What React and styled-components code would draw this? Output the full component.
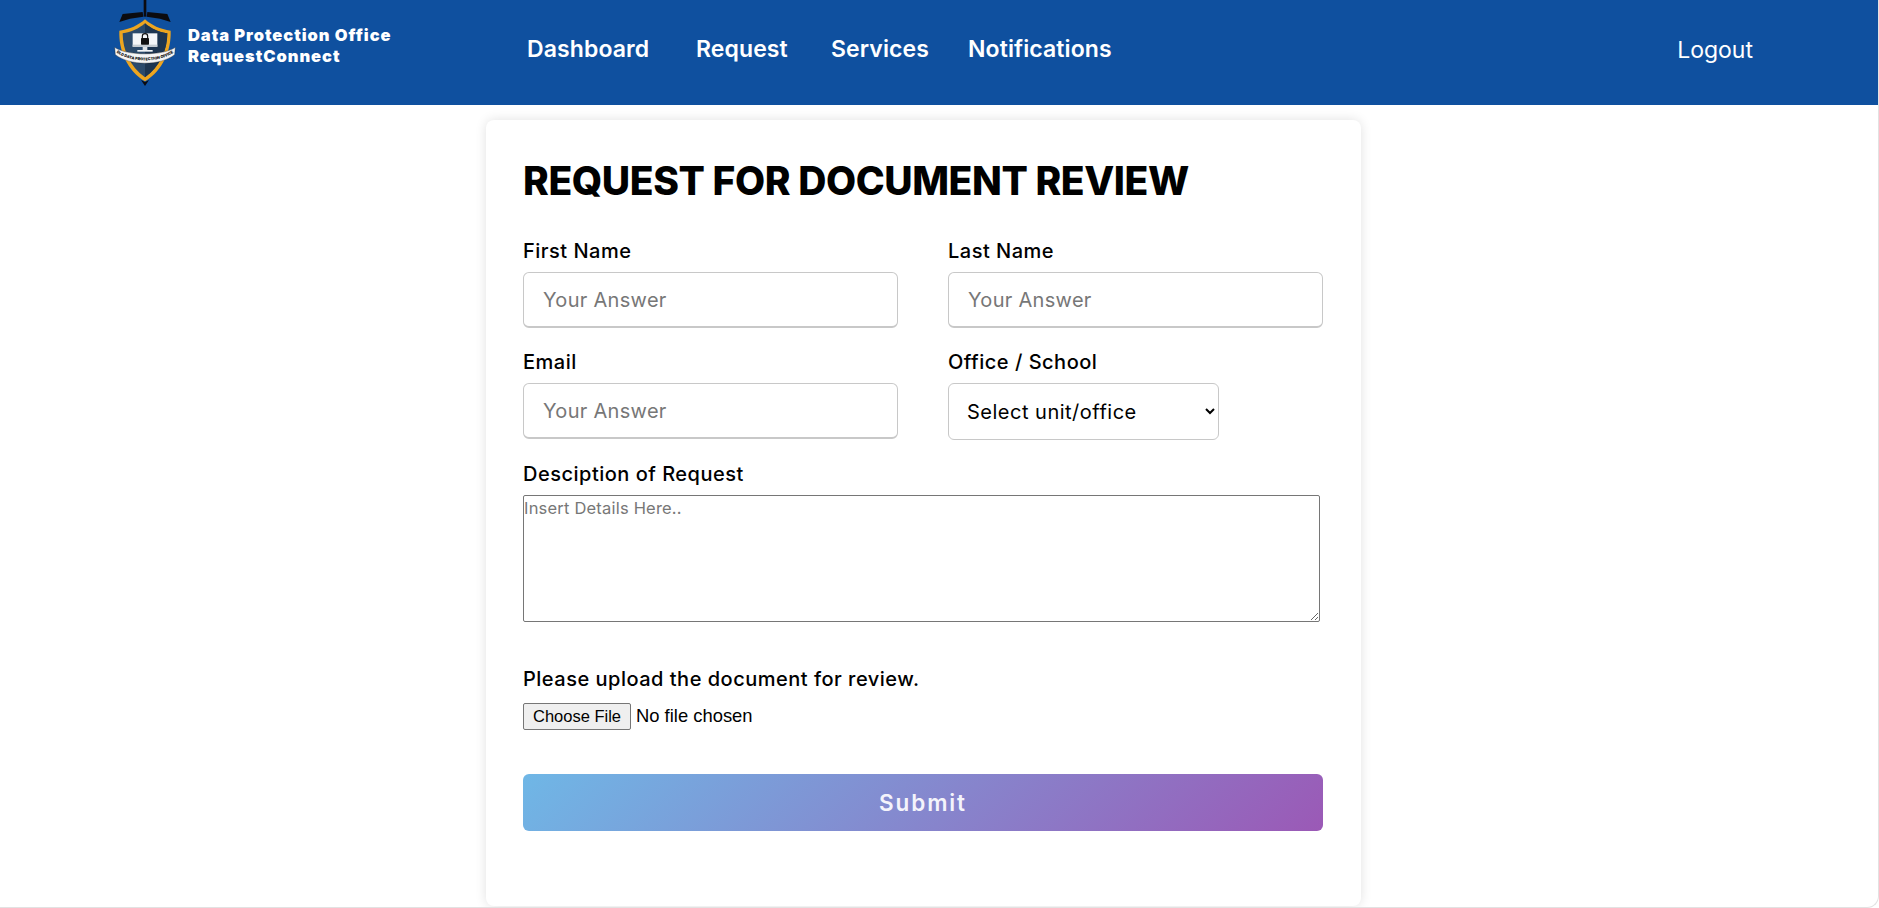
import React from 'react';
import styled, { createGlobalStyle } from 'styled-components';

const GlobalStyle = createGlobalStyle`
  * {
    box-sizing: border-box;
  }
  body {
    margin: 0;
    background: #fff;
    font-family: Inter, 'Open Sans', sans-serif;
    color: #000;
  }
`;

const Page = styled.div`
  height: 908px;
  overflow: hidden;
  border-right: 1px solid #e2e2e2;
  border-bottom: 1px solid #e2e2e2;
  border-bottom-right-radius: 12px;
`;

const Header = styled.header`
  height: 105px;
  background: #0f509f;
  display: flex;
  align-items: flex-start;
  padding: 0 125px 0 110px;
`;

const Brand = styled.div`
  display: flex;
  align-items: flex-start;
  width: 417px;
`;

const BrandText = styled.div`
  margin: 25px 0 0 8px;
  color: #fff;
  font-family: Inter, sans-serif;
  font-weight: 900;
  font-size: 16.5px;
  line-height: 21px;
  letter-spacing: 0.95px;
  white-space: nowrap;
`;

const Nav = styled.nav`
  display: grid;
  grid-template-columns: 126px 92px 94px 142px;
  column-gap: 43px;
  margin-top: 33px;
`;

const NavLink = styled.a`
  color: #fff;
  font-size: 23px;
  font-weight: 600;
  line-height: 32px;
  letter-spacing: 0.1px;
  white-space: nowrap;
`;

const Logout = styled.a`
  margin-left: auto;
  margin-top: 34px;
  color: #fff;
  font-size: 23px;
  font-weight: 400;
  line-height: 32px;
`;

const Card = styled.main`
  width: 875px;
  height: 786px;
  margin: 15px 0 0 486px;
  padding: 37px;
  background: #fff;
  border-radius: 8px;
  box-shadow: 0 0 12px rgba(0, 0, 0, 0.12);
`;

const Title = styled.h1`
  margin: 0 0 32px;
  font-size: 39px;
  line-height: 48px;
  font-weight: 800;
  letter-spacing: -0.42px;
  white-space: nowrap;
`;

const Grid = styled.div`
  display: grid;
  grid-template-columns: 375px 375px;
  column-gap: 50px;
  row-gap: 20px;
`;

const Field = styled.div`
  display: flex;
  flex-direction: column;
  align-items: flex-start;
`;

const Label = styled.label`
  font-size: 20px;
  font-weight: 500;
  line-height: 28px;
  letter-spacing: 0.5px;
  margin-bottom: 7px;
`;

const TextInput = styled.input`
  width: 100%;
  height: 56px;
  padding: 0 19px;
  border: 1px solid #c8c8c8;
  border-bottom-width: 2px;
  border-radius: 6px;
  font-family: inherit;
  font-size: 20px;
  letter-spacing: 0.3px;
  background: #fff;
  &::placeholder {
    color: #777;
  }
`;

const Select = styled.select`
  width: 271px;
  height: 57px;
  padding: 0 14px;
  border: 1px solid #c8c8c8;
  border-radius: 6px;
  background: #fff;
  font-family: inherit;
  font-size: 20px;
  letter-spacing: 0.5px;
  color: #000;
`;

const DescriptionField = styled(Field)`
  margin-top: 20px;
`;

const Textarea = styled.textarea`
  display: block;
  width: 797px;
  height: 127px;
  padding: 0;
  border: 1px solid #767676;
  border-radius: 2px;
  font-family: inherit;
  font-size: 16.5px;
  line-height: 24px;
  letter-spacing: 0.2px;
  &::placeholder {
    color: #777;
  }
`;

const UploadField = styled(Field)`
  margin-top: 43px;
`;

const FileInput = styled.input`
  font-family: 'Liberation Sans', Arial, sans-serif;
  font-size: 18.4px;
  color: #000;
  margin-top: 3px;
  &::file-selector-button {
    font-family: inherit;
    font-size: 16.5px;
    height: 27px;
    width: 108px;
    padding: 0;
    margin-right: 5px;
    border: 1px solid #767676;
    border-radius: 2px;
    background: #efefef;
    color: #000;
  }
`;

const SubmitButton = styled.button`
  display: block;
  width: 800px;
  height: 57px;
  margin-top: 44px;
  border: 0;
  border-radius: 6px;
  background: linear-gradient(135deg, #6fb7e6 0%, #9b59b6 100%);
  color: #f4f4fb;
  font-family: inherit;
  font-size: 22.5px;
  font-weight: 600;
  letter-spacing: 1.9px;
`;

function Logo() {
  return (
    <svg width="70" height="90" viewBox="0 0 210 270" aria-hidden="true">
      <rect x="101" y="0" width="8" height="50" fill="#0b0b10" />
      <path d="M28 66 L38 42 L98 36 L100 50 L60 56 Z" fill="#0b0b10" />
      <path d="M182 66 L172 42 L112 36 L110 50 L150 56 Z" fill="#0b0b10" />
      <path d="M105 58 C125 76 150 88 182 92 C184 150 160 210 105 244 C50 210 26 150 28 92 C60 88 85 76 105 58 Z" fill="#eda51f" />
      <path d="M105 70 C123 86 146 96 172 100 C172 150 150 200 105 232 C60 200 38 150 38 100 C64 96 87 86 105 70 Z" fill="#2b4a6b" />
      <path d="M105 70 C123 86 146 96 172 100 C172 150 150 200 105 232 Z" fill="#1d3550" />
      <path d="M93 240 L105 258 L117 240 L105 246 Z" fill="#0b0b10" />
      <rect x="68" y="100" width="74" height="40" fill="#f4f6f8" />
      <rect x="68" y="134" width="74" height="7" fill="#c5ccd2" />
      <rect x="98" y="141" width="14" height="9" fill="#dfe3e6" />
      <rect x="82" y="150" width="46" height="5" fill="#f4f6f8" />
      <path d="M97 115 V109 A8 8 0 0 1 113 109 V115" fill="none" stroke="#111" strokeWidth="3.5" />
      <rect x="93" y="114" width="24" height="20" rx="2" fill="#111" />
      <path d="M14 142 C50 168 160 168 196 142 L194 164 C150 198 60 198 16 164 Z" fill="#f5f5f5" stroke="#111" strokeWidth="1" />
      <path id="ribbon-line" d="M16 155 C60 190 150 190 194 155" fill="none" />
      <text fontFamily="Inter, sans-serif" fontSize="11.5" fontWeight="900" fill="#111">
        <textPath href="#ribbon-line" startOffset="50%" textAnchor="middle">DLD DATA PROTECTION OFFICE</textPath>
      </text>
    </svg>
  );
}

export default function App() {
  return (
    <Page>
      <GlobalStyle />
      <Header>
        <Brand>
          <Logo />
          <BrandText>
            Data Protection Office
            <br />
            RequestConnect
          </BrandText>
        </Brand>
        <Nav>
          <NavLink>Dashboard</NavLink>
          <NavLink>Request</NavLink>
          <NavLink>Services</NavLink>
          <NavLink>Notifications</NavLink>
        </Nav>
        <Logout>Logout</Logout>
      </Header>
      <Card>
        <Title>REQUEST FOR DOCUMENT REVIEW</Title>
        <Grid>
          <Field>
            <Label>First Name</Label>
            <TextInput placeholder="Your Answer" />
          </Field>
          <Field>
            <Label>Last Name</Label>
            <TextInput placeholder="Your Answer" />
          </Field>
          <Field>
            <Label>Email</Label>
            <TextInput placeholder="Your Answer" />
          </Field>
          <Field>
            <Label>Office / School</Label>
            <Select defaultValue="">
              <option value="">Select unit/office</option>
            </Select>
          </Field>
        </Grid>
        <DescriptionField>
          <Label>Desciption of Request</Label>
          <Textarea placeholder="Insert Details Here.." />
        </DescriptionField>
        <UploadField>
          <Label>Please upload the document for review.</Label>
          <FileInput type="file" />
        </UploadField>
        <SubmitButton type="button">Submit</SubmitButton>
      </Card>
    </Page>
  );
}
